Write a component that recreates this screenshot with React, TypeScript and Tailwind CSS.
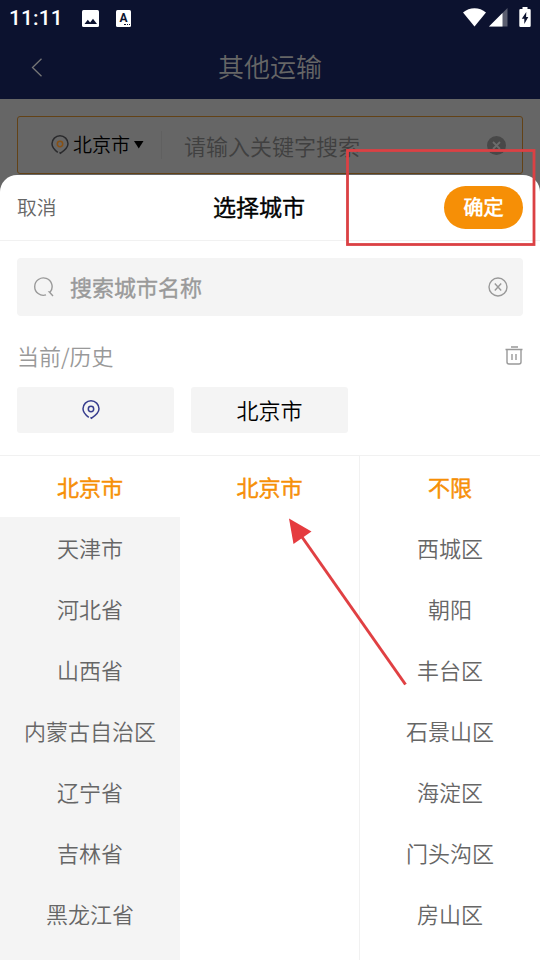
import type { SVGProps } from 'react';

const PROVINCES = ['北京市', '天津市', '河北省', '山西省', '内蒙古自治区', '辽宁省', '吉林省', '黑龙江省'];
const CITIES = ['北京市'];
const DISTRICTS = ['不限', '西城区', '朝阳', '丰台区', '石景山区', '海淀区', '门头沟区', '房山区'];

function PinIcon({ dot = 'currentColor', ...props }: SVGProps<SVGSVGElement> & { dot?: string }) {
  return (
    <svg width="18" height="20" viewBox="0 0 18 20" fill="none" stroke="currentColor" strokeWidth="1.5" {...props}>
      <path d="M6.800 17.400C3 14.600 1 12 1 8.800a8 8 0 0 1 16 0c0 3.300-2.700 6.200-7.400 9.400L8.500 17.300" />
      <circle cx="9" cy="9" r="2.7" stroke={dot} />
    </svg>
  );
}

function StatusBar() {
  return (
    <div className="flex h-9 items-center justify-between px-[9px] text-white">
      <div className="flex items-center">
        <span className="w-[73px] font-['Roboto',sans-serif] text-[21px] leading-9 font-medium tracking-[0.1px]">11:11</span>
        <svg width="17" height="17" viewBox="0 0 17 17">
          <rect width="17" height="17" rx="1.5" fill="#fff" />
          <path d="M2.5 14l3.3-4.2 2.3 2.6L11 8.8l4 5.2z" fill="#0c122f" />
        </svg>
        <div className="relative ml-[17px] h-[17px] w-[15px] rounded-[1.5px] bg-white">
          <span className="absolute inset-x-0 top-0 text-center font-['Roboto',sans-serif] text-[12px] leading-4 font-bold text-[#0c122f]">A</span>
          <span className="absolute right-[1px] bottom-[2px] w-[6px] border-b border-dotted border-[#0c122f]" />
        </div>
      </div>
      <div className="mb-[2px] flex items-center">
        <svg width="23" height="19" viewBox="0 0 23 19" fill="#fff">
          <path d="M0 4.5C6.5-1.3 16.5-1.3 23 4.5L11.5 18.5z" />
        </svg>
        <svg className="ml-[3px]" width="19" height="19" viewBox="0 0 19 19">
          <path d="M0 18.500L18.500 0v18.500z" fill="#5b5e70" />
          <path d="M0 18.500L13.500 5v13.500z" fill="#fff" />
        </svg>
        <svg className="ml-[11px]" width="12" height="20" viewBox="0 0 12 20">
          <path d="M3.500 0h5v2H10.500a1.200 1.200 0 0 1 1.200 1.200V18.800a1.200 1.200 0 0 1-1.200 1.200H1.500A1.200 1.200 0 0 1 .3 18.800V3.200A1.200 1.200 0 0 1 1.500 2h2z" fill="#fff" />
          <path d="M7.300 5L2.800 11.700h2.500V17l4-7H7.100z" fill="#0c122f" />
        </svg>
      </div>
    </div>
  );
}

function PageHeader() {
  return (
    <div className="relative flex h-[63px] items-center justify-center pb-[5px] text-[26px] text-[#666]">
      <svg className="absolute left-[31px] top-[22px]" width="12" height="19" viewBox="0 0 12 19" fill="none" stroke="#777" strokeWidth="1.3">
        <path d="M10.500 .8L1.500 9.500l9 8.700" />
      </svg>
      其他运输
    </div>
  );
}

function KeywordSearch() {
  return (
    <div className="mx-[17px] mt-[17px] flex h-[58px] items-center rounded-[3px] border border-[#634216]">
      <PinIcon className="ml-[33px] text-[#2a2a2c]" dot="#875014" />
      <span className="ml-[4px] pb-px text-[19px] text-black">北京市</span>
      <svg className="ml-[4px]" width="10" height="8" viewBox="0 0 10 8">
        <path d="M0 0h9.500L4.750 7.500z" fill="#000" />
      </svg>
      <span className="ml-[17px] h-7 w-px bg-[#606060]" />
      <span className="ml-[22px] flex-1 text-[22px] text-[#404040]">请输入关键字搜索</span>
      <svg className="mr-[16px]" width="19" height="19" viewBox="0 0 19 19">
        <circle cx="9.500" cy="9.500" r="9.500" fill="#484848" />
        <path d="M6 6l7 7M13 6l-7 7" stroke="#6c6c6c" strokeWidth="1.800" />
      </svg>
    </div>
  );
}

function SheetHeader() {
  return (
    <div className="flex h-[66px] items-center border-b border-[#f1f1f1] px-[17px]">
      <button className="w-[79px] pb-px text-left text-[19.800px] text-[#666]">取消</button>
      <h2 className="flex-1 pr-[22px] pb-[2px] text-center text-[23px] text-black [-webkit-text-stroke:0.500px_currentColor]">选择城市</h2>
      <button className="h-[43px] w-[79px] rounded-full bg-[#f68f06] pb-px text-[20px] font-bold text-white">确定</button>
    </div>
  );
}

function CitySearch() {
  return (
    <div className="mx-[17px] mt-[17px] flex h-[58px] items-center rounded-[4px] bg-[#f4f4f4]">
      <svg className="ml-[17px]" width="20" height="20" viewBox="0 0 20 20" fill="none" stroke="#999" strokeWidth="1.4">
        <path d="M12 17.900A8.700 8.700 0 1 1 16.300 14.900L15.300 14.900L19 19" />
      </svg>
      <span className="ml-[16px] flex-1 pb-[2px] text-[22px] text-[#999] [-webkit-text-stroke:0.500px_currentColor]">搜索城市名称</span>
      <svg className="mr-[15px]" width="20" height="20" viewBox="0 0 20 20" fill="none" stroke="#999" strokeWidth="1.4">
        <circle cx="10" cy="10" r="9" />
        <path d="M6.800 6.500l6.400 7M13.200 6.500l-6.400 7" />
      </svg>
    </div>
  );
}

function History() {
  return (
    <div className="px-[17px] pt-[24px]">
      <div className="flex h-[31px] items-center justify-between text-[22px] text-[#999]">
        <span>当前/历史</span>
        <svg width="18" height="19" viewBox="0 0 18 19" fill="none" stroke="#999" strokeWidth="1.4">
          <path d="M6 1h7M.5 3.500h17M2 3.500v12.500a2 2 0 0 0 2 2h10a2 2 0 0 0 2-2V3.500M7 8v6M11 8v6" />
        </svg>
      </div>
      <div className="mt-[16px] flex gap-[17px]">
        <div className="flex h-[46px] w-[157px] items-center justify-center rounded-[3px] bg-[#f4f4f4]">
          <PinIcon className="mr-[10px] text-[#373d8e]" />
        </div>
        <div className="flex h-[46px] w-[157px] items-center justify-center rounded-[3px] bg-[#f4f4f4] pb-px text-[22px] text-black">北京市</div>
      </div>
    </div>
  );
}

function Column({ items, muted }: { items: string[]; muted?: boolean }) {
  return (
    <ul className={muted ? 'bg-[#f4f4f4]' : 'bg-white not-last:border-r not-last:border-[#f1f1f1]'}>
      {items.map((item, index) => (
        <li
          key={item}
          className={
            index === 0
              ? 'flex h-[61px] items-center justify-center bg-white text-[22px] text-[#f68f06] [-webkit-text-stroke:0.600px_currentColor]'
              : 'flex h-[61px] items-center justify-center text-[22px] text-[#666]'
          }
        >
          {item}
        </li>
      ))}
    </ul>
  );
}

// Red frame and arrow drawn over the screen
function Annotations() {
  return (
    <svg className="pointer-events-none absolute inset-0" width="540" height="960" viewBox="0 0 540 960">
      <rect x="347.500" y="150.500" width="186.500" height="94" fill="none" stroke="#db4144" strokeWidth="2.8" />
      <path d="M405.500 684.500L302 537" stroke="#e04043" strokeWidth="3" />
      <path d="M289 518.500L311.500 531.500L293.500 544z" fill="#e53b3f" />
    </svg>
  );
}

export default function App() {
  return (
    <div className="relative flex h-[960px] w-[540px] flex-col overflow-hidden bg-[#666] font-['Noto_Sans_CJK_SC_DemiLight','Noto_Sans_CJK_SC',sans-serif] font-[350]">
      <div className="h-[99px] shrink-0 bg-[#0c122f]">
        <StatusBar />
        <PageHeader />
      </div>
      <KeywordSearch />
      <div className="mt-px flex flex-1 flex-col rounded-t-[17px] bg-white">
        <SheetHeader />
        <CitySearch />
        <History />
        <div className="mt-[22px] grid flex-1 grid-cols-3 border-t border-[#f1f1f1]">
          <Column items={PROVINCES} muted />
          <Column items={CITIES} />
          <Column items={DISTRICTS} />
        </div>
      </div>
      <Annotations />
    </div>
  );
}
